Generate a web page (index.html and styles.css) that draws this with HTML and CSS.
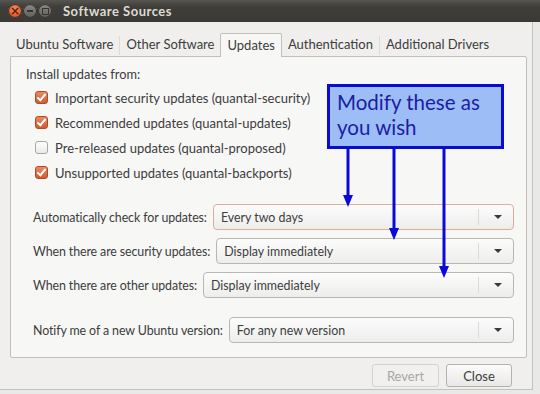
FILE: index.html
```html
<!DOCTYPE html>
<html>
<head>
    <title>Software Sources</title>
    <link rel="stylesheet" href="styles.css">
</head>
<body>
    <div class="window">
        <!-- Titelleiste -->
        <div class="titlebar">
            <div class="wm-buttons">
                <span class="wm close">&times;</span>
                <span class="wm minimize"><span class="dash"></span></span>
                <span class="wm maximize"><span class="square"></span></span>
            </div>
            <span class="title">Software Sources</span>
        </div>

        <div class="body">
            <!-- Reiter -->
            <div class="tabs">
                <div class="tab">Ubuntu Software</div>
                <div class="tab">Other Software</div>
                <div class="tab active">Updates</div>
                <div class="tab">Authentication</div>
                <div class="tab last">Additional Drivers</div>
            </div>

            <div class="panel">
                <div class="section-label">Install updates from:</div>
                <div class="checks">
                    <div class="check"><span class="box on"></span>Important security updates (quantal-security)</div>
                    <div class="check"><span class="box on"></span>Recommended updates (quantal-updates)</div>
                    <div class="check"><span class="box"></span>Pre-released updates (quantal-proposed)</div>
                    <div class="check"><span class="box on"></span>Unsupported updates (quantal-backports)</div>
                </div>

                <div class="combos">
                    <div class="combo-row">
                        <span class="label">Automatically check for updates:</span>
                        <div class="combo focus"><span class="value">Every two days</span><span class="arrow"></span></div>
                    </div>
                    <div class="combo-row">
                        <span class="label">When there are security updates:</span>
                        <div class="combo"><span class="value">Display immediately</span><span class="arrow"></span></div>
                    </div>
                    <div class="combo-row">
                        <span class="label">When there are other updates:</span>
                        <div class="combo"><span class="value">Display immediately</span><span class="arrow"></span></div>
                    </div>
                </div>

                <div class="combo-row notify">
                    <span class="label">Notify me of a new Ubuntu version:</span>
                    <div class="combo"><span class="value">For any new version</span><span class="arrow"></span></div>
                </div>
            </div>

            <!-- Buttons unten -->
            <div class="actions">
                <button class="btn" disabled>Revert</button>
                <button class="btn">Close</button>
            </div>
        </div>

        <!-- Anmerkung mit Pfeilen -->
        <div class="note">Modify these as<br>you wish</div>
        <svg class="arrows" width="540" height="394" viewBox="0 0 540 394">
            <g stroke="#0a0ad8" stroke-width="3" fill="none">
                <line x1="348" y1="149" x2="348" y2="198"/>
                <line x1="394" y1="149" x2="394" y2="231"/>
                <line x1="444" y1="149" x2="444" y2="269"/>
            </g>
            <g fill="#0a0ad8">
                <polygon points="343,195 353,195 348,207"/>
                <polygon points="389,228 399,228 394,240"/>
                <polygon points="439,266 449,266 444,278"/>
            </g>
        </svg>
    </div>
</body>
</html>
```

FILE: styles.css
```css
body {
    margin: 0;
    background-color: #e9e9e8;
    font-family: "Lato", "DejaVu Sans", sans-serif;
    font-size: 12px;
    color: #3c3c3c;
}
.window {
    position: relative;
    width: 540px;
    height: 394px;
    overflow: hidden;
}
.titlebar {
    height: 22px;
    background: linear-gradient(#56554f, #3f3e3a 30%, #3a3935);
    display: flex;
    align-items: center;
    padding-left: 8px;
}
.wm-buttons {
    display: flex;
    gap: 1px;
}
.wm {
    width: 14px;
    height: 14px;
    border-radius: 50%;
    display: flex;
    align-items: center;
    justify-content: center;
    background: linear-gradient(#8b8a85, #5f5e59);
    box-shadow: inset 0 0 0 1px #33322f;
}
.wm.close {
    background: radial-gradient(circle at 50% 35%, #f6895a, #de5a26 70%, #b8431a);
    color: #5a1f0d;
    font: bold 12px "DejaVu Sans", sans-serif;
    line-height: 14px;
}
.wm .dash {
    width: 6px;
    height: 2px;
    background-color: #35342f;
}
.wm .square {
    width: 5px;
    height: 5px;
    border: 1px solid #35342f;
}
.title {
    margin-left: 11px;
    color: #dfdbd2;
    font-weight: bold;
    font-size: 13px;
    letter-spacing: 0.5px;
}
.body {
    width: 533px;
    height: 368px;
    background-color: #f0efee;
    border-right: 1px solid #c4c2bd;
    border-bottom: 1px solid #c4c2bd;
    padding-left: 10px;
    box-sizing: border-box;
}
.tabs {
    display: flex;
    align-items: flex-end;
    height: 34px;
    position: relative;
    z-index: 1;
}
.tab {
    padding: 0 6px;
    height: 19px;
    line-height: 17px;
    border-right: 1px solid #dddbd6;
    margin-bottom: 1px;
    font-size: 13px;
}
.tab.last {
    border-right: none;
}
.tab.active {
    height: 23px;
    line-height: 22px;
    margin-left: -1px;
    margin-bottom: -1px;
    background-color: #f7f7f6;
    border: 1px solid #c2bfb9;
    border-bottom: none;
    border-radius: 2px 2px 0 0;
}
.panel {
    width: 517px;
    height: 302px;
    box-sizing: border-box;
    background-color: #f7f7f6;
    border: 1px solid #c2bfb9;
    border-radius: 0 2px 2px 2px;
    padding: 8px 12px 0 15px;
}
.section-label {
    line-height: 18px;
    font-size: 12.8px;
}
.checks {
    margin-top: 2px;
    padding-left: 9px;
}
.check {
    height: 25px;
    display: flex;
    align-items: center;
    font-size: 13px;
}
.box {
    width: 11px;
    height: 11px;
    border: 1px solid #a9a7a2;
    border-radius: 3px;
    background: linear-gradient(#ffffff, #ebeae8);
    margin-right: 7px;
    position: relative;
}
.box.on {
    border-color: #b04a25;
    background: linear-gradient(#ea8a60, #cf5b30);
}
.box.on::after {
    content: "";
    position: absolute;
    left: 3px;
    top: 0;
    width: 3px;
    height: 7px;
    border: solid #ffffff;
    border-width: 0 2px 2px 0;
    transform: rotate(40deg);
}
.combos {
    margin-top: 19px;
    padding-left: 7px;
    display: flex;
    flex-direction: column;
    gap: 8px;
}
.combo-row {
    display: flex;
    align-items: center;
    gap: 6px;
    font-size: 12.4px;
}
.combo-row .label {
    letter-spacing: -0.1px;
}
.combo-row.notify {
    margin-top: 19px;
    padding-left: 7px;
}
.combo {
    flex: 1;
    height: 26px;
    box-sizing: border-box;
    border: 1px solid #bab7b1;
    border-radius: 4px;
    background: linear-gradient(#fcfcfc, #ededec);
    display: flex;
    align-items: center;
    padding-left: 7px;
}
.combo.focus {
    border-color: #e0ad98;
}
.combo .value {
    flex: 1;
}
.combo .arrow {
    width: 34px;
    height: 16px;
    border-left: 1px solid #dcdad6;
    position: relative;
}
.combo .arrow::after {
    content: "";
    position: absolute;
    left: 15px;
    top: 6px;
    border-left: 4px solid transparent;
    border-right: 4px solid transparent;
    border-top: 4px solid #3a3a3a;
}
.actions {
    width: 502px;
    display: flex;
    justify-content: flex-end;
    gap: 7px;
    margin-top: 6px;
}
.btn {
    height: 23px;
    width: 66px;
    border: 1px solid #b5b2ac;
    border-radius: 3px;
    background: linear-gradient(#fbfbfb, #e9e8e6);
    font-family: "Lato", "DejaVu Sans", sans-serif;
    font-size: 13px;
    color: #3c3c3c;
    padding: 0;
}
.btn:disabled {
    width: 67px;
    border-color: #d4d2ce;
    background: #f1f0ef;
    color: #a6a6a6;
}
.note {
    position: absolute;
    left: 327px;
    top: 84px;
    width: 177px;
    height: 65px;
    box-sizing: border-box;
    background-color: #9dbdf6;
    border: 3px solid #0a0ad0;
    padding: 3px 0 0 7px;
    font-size: 20.5px;
    line-height: 25px;
    color: #1c1ca6;
}
.arrows {
    position: absolute;
    left: 0;
    top: 0;
    pointer-events: none;
}
```
